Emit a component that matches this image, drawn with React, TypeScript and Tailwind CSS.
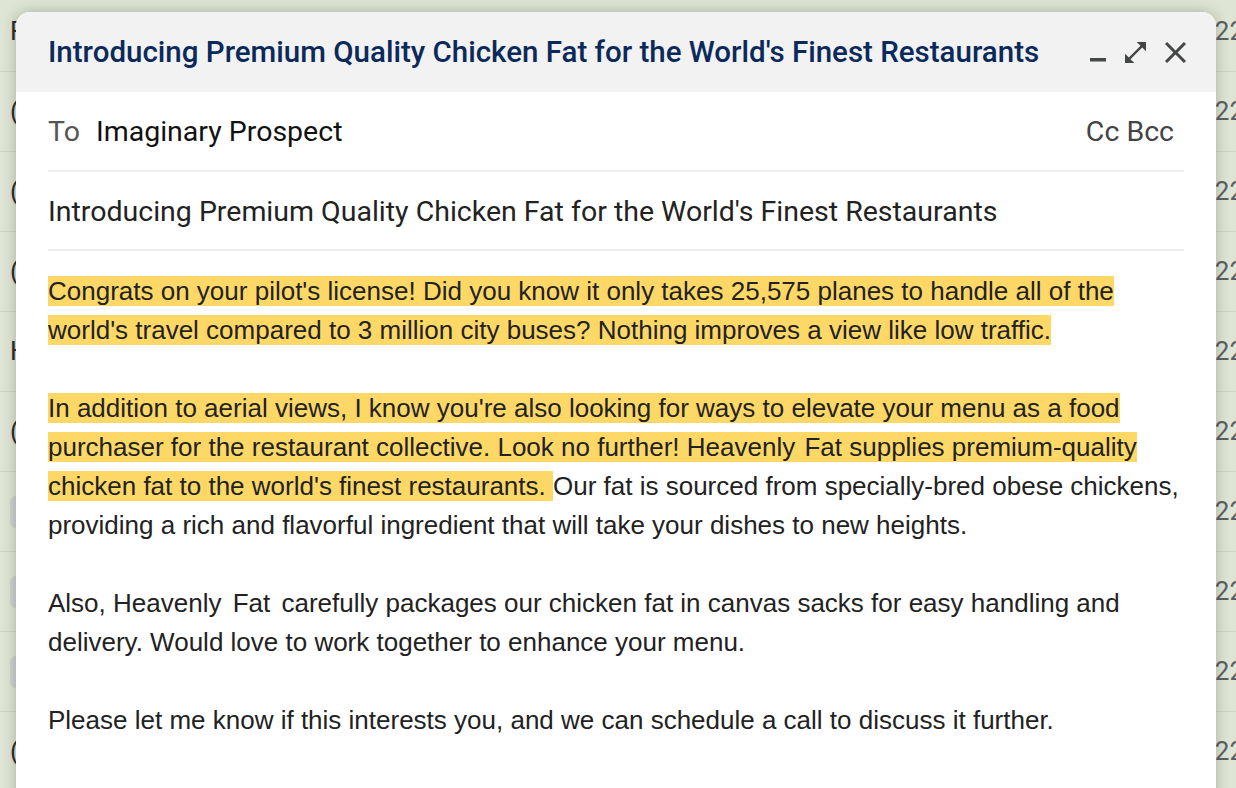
import React from 'react'

const rows = [
  { left: 'F', chip: false },
  { left: '(', chip: false },
  { left: '(', chip: false },
  { left: '(', chip: false },
  { left: 'H', chip: false },
  { left: '(', chip: false },
  { left: '', chip: true },
  { left: '', chip: true },
  { left: '', chip: true },
  { left: '(', chip: false },
]

function Hl({ children }: { children: React.ReactNode }) {
  return <span className="bg-[#fed866]">{children}</span>
}

function MinimizeIcon() {
  return (
    <svg width="16" height="20" viewBox="0 0 16 20" className="mt-1">
      <rect x="0" y="14" width="16" height="3.5" fill="#444746" />
    </svg>
  )
}

function ExpandIcon() {
  return (
    <svg width="21" height="21" viewBox="3 3 18 18">
      <path d="M21 11V3h-8l3.29 3.29-10 10L3 13v8h8l-3.29-3.29 10-10z" fill="#444746" />
    </svg>
  )
}

function CloseIcon() {
  return (
    <svg width="21" height="21" viewBox="5 5 14 14">
      <path
        d="M19 6.41L17.59 5 12 10.59 6.41 5 5 6.41 10.59 12 5 17.59 6.41 19 12 13.41 17.59 19 19 17.59 13.41 12z"
        fill="#444746"
      />
    </svg>
  )
}

export default function App() {
  return (
    <div className="relative w-[1236px] h-[788px] overflow-hidden bg-[#dfe5d4] font-['Roboto',sans-serif]">
      {/* inbox list behind the compose window */}
      <div className="-mt-2 flex flex-col">
        {rows.map((r, i) => (
          <div key={i} className="h-20 flex items-center justify-between border-b border-[#cdd3c5] pl-[10px]">
            {r.chip ? (
              <div className="w-9 h-8 rounded-md bg-[#d0d2d3]" />
            ) : (
              <span className="text-[26px] text-[#2a2a2a]">{r.left}</span>
            )}
            <span className="text-[26px] text-[#5b5f63] -mr-2">'22</span>
          </div>
        ))}
      </div>

      {/* compose window */}
      <div className="absolute left-4 top-3 w-[1200px] h-[800px] bg-white rounded-t-[14px] shadow-[0_0_14px_rgba(40,50,30,0.3)] overflow-hidden">
        <div className="h-20 bg-[#f2f2f2] flex items-center justify-between pl-8 pr-[30px]">
          <h1 className="text-[29.5px] font-medium text-[#0b2a5b]">
            Introducing Premium Quality Chicken Fat for the World's Finest Restaurants
          </h1>
          <div className="flex items-center gap-[19px]">
            <MinimizeIcon />
            <ExpandIcon />
            <CloseIcon />
          </div>
        </div>

        <div className="px-8">
          <div className="h-20 pt-0.5 flex items-center justify-between border-b-2 border-[#eceef1] text-[28.5px]">
            <div className="flex items-center gap-[16px]">
              <span className="text-[#555]">To</span>
              <span className="text-[#111]">Imaginary Prospect</span>
            </div>
            <span className="text-[#444] mr-2.5">Cc Bcc</span>
          </div>
          <div className="h-[79px] pt-1 flex items-center border-b-2 border-[#eceef1] text-[28.5px] text-[#222]">
            Introducing Premium Quality Chicken Fat for the World's Finest Restaurants
          </div>

          <div className="pt-[21px] font-['Liberation_Sans',Arial,sans-serif] text-[26px] leading-[39px] text-[#222] whitespace-nowrap">
            <p>
              <Hl>Congrats on your pilot's license! Did you know it only takes 25,575 planes to handle all of the</Hl>
              <br />
              <Hl>world's travel compared to 3 million city buses? Nothing improves a view like low traffic.</Hl>
            </p>
            <br />
            <p>
              <Hl>In addition to aerial views, I know you're also looking for ways to elevate your menu as a food</Hl>
              <br />
              <Hl>
                purchaser for the restaurant collective. Look no further! Heavenly <span className="ml-0.5">Fat</span> supplies premium-quality
              </Hl>
              <br />
              <Hl>chicken fat to the world's finest restaurants. </Hl>Our fat is sourced from specially-bred obese chickens,
              <br />
              providing a rich and flavorful ingredient that will take your dishes to new heights.
            </p>
            <br />
            <p>
              Also, Heavenly <span className="ml-1 mr-1">Fat</span> carefully packages our chicken fat in canvas sacks for easy handling and
              <br />
              delivery. Would love to work together to enhance your menu.
            </p>
            <br />
            <p>Please let me know if this interests you, and we can schedule a call to discuss it further.</p>
          </div>
        </div>
      </div>
    </div>
  )
}
